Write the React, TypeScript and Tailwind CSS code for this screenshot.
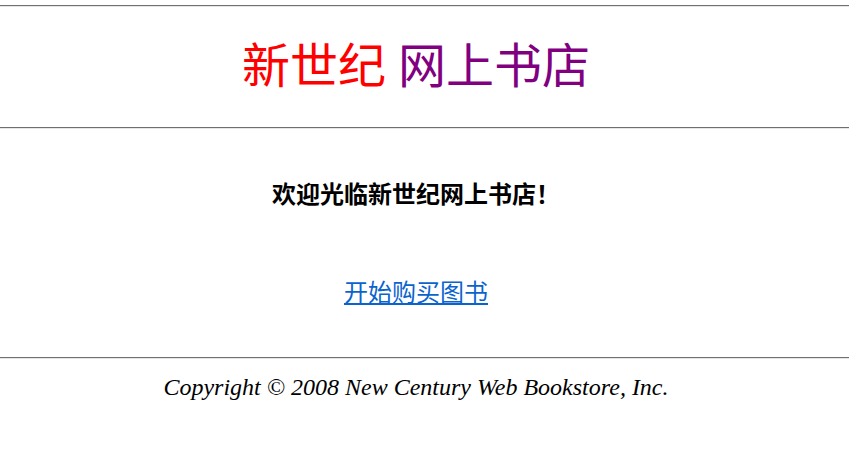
export default function App() {
  const serif = { fontFamily: '"Liberation Serif", "Noto Sans CJK SC", serif' };
  return (
    <div className="min-h-[458px] w-full bg-white text-black" style={serif}>
      <div className="pt-[5px]">
        <div className="h-[2px] border-t border-[#6f6f6f] bg-[#e6e6e6]" />
      </div>
      <div className="flex h-[120px] w-[832px] items-center justify-center">
        <h1 className="text-[48px] leading-none font-normal">
          <span className="text-[#ff0000]">新世纪</span>{" "}
          <span className="text-[#800080]">网上书店</span>
        </h1>
      </div>
      <div className="h-[2px] border-t border-[#6f6f6f] bg-[#e6e6e6]" />
      <div className="flex w-[832px] flex-col items-center pt-[52px]">
        <h2 className="text-[24px] leading-[28px] font-bold">欢迎光临新世纪网上书店！</h2>
        <a href="#" className="mt-[70px] text-[24px] leading-[28px] text-[#0b63ce] underline underline-offset-2">
          开始购买图书
        </a>
      </div>
      <div className="mt-[50px] h-[2px] border-t border-[#6f6f6f] bg-[#e6e6e6]" />
      <div className="flex w-[832px] justify-center pt-[14px]">
        <p className="text-[24px] leading-[28px] italic">Copyright © 2008 New Century Web Bookstore, Inc.</p>
      </div>
    </div>
  );
}
